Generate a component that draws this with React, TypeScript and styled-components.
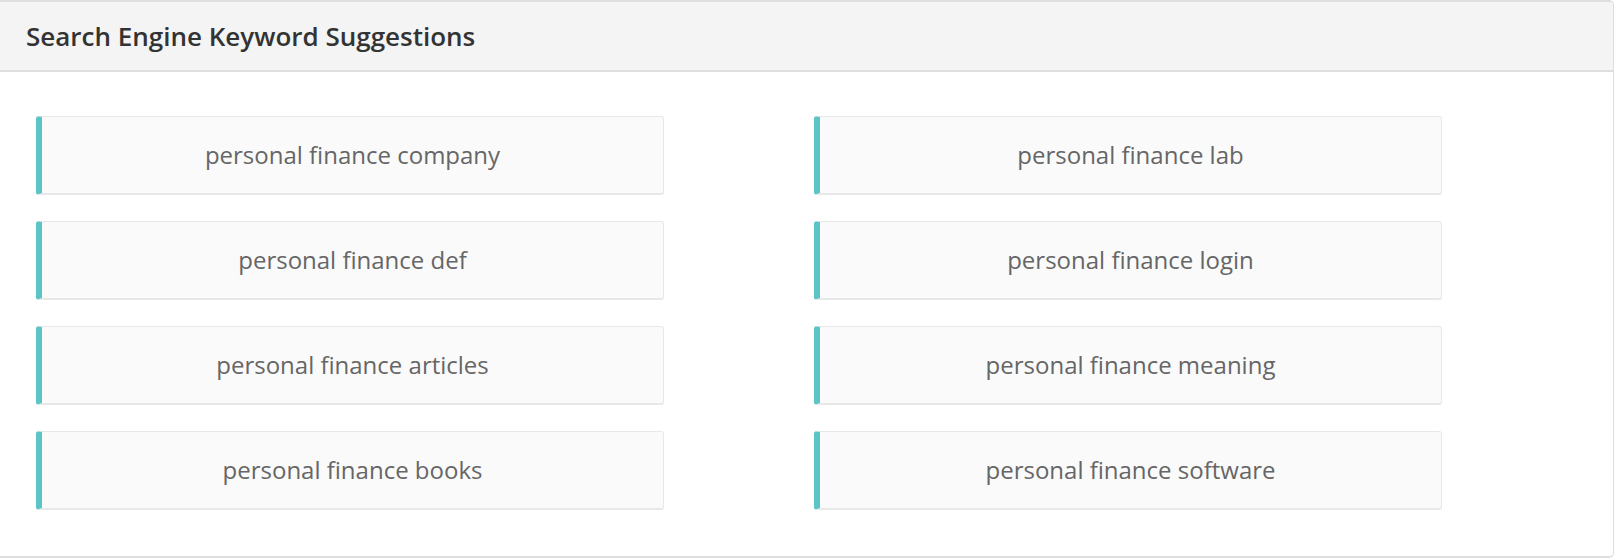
import React from "react";
import styled, { createGlobalStyle } from "styled-components";

const Global = createGlobalStyle`
  html, body { margin: 0; padding: 0; background: #ffffff; }
  body { font-family: "Open Sans", "Liberation Sans", sans-serif; }
`;

const Panel = styled.section`
  box-sizing: border-box;
  width: 1614px;
  height: 558px;
  border: 1px solid #dedede;
  border-left-width: 0;
  border-top-width: 2px;
  border-bottom-width: 2px;
  border-radius: 0 5px 5px 0;
  background: #ffffff;
  overflow: hidden;
`;

const Header = styled.header`
  box-sizing: border-box;
  height: 70px;
  background: #f4f4f4;
  border-bottom: 2px solid #dedede;
  display: flex;
  align-items: center;
  padding-left: 26px;
`;

const Title = styled.h2`
  margin: 0;
  font-size: 26px;
  font-weight: 600;
  color: #333333;
`;

const Grid = styled.div`
  display: grid;
  grid-template-columns: 628px 628px;
  column-gap: 150px;
  row-gap: 26px;
  padding: 44px 0 0 36px;
`;

const Card = styled.div`
  box-sizing: border-box;
  height: 79px;
  display: flex;
  align-items: center;
  justify-content: center;
  padding-bottom: 2px;
  background: #fafafa;
  border: 1px solid #e8e8e8;
  border-bottom-width: 2px;
  border-left: 6px solid #5cc4c7;
  border-radius: 3px;
  font-size: 24px;
  color: #666666;
`;

const keywords = [
  "personal finance company",
  "personal finance lab",
  "personal finance def",
  "personal finance login",
  "personal finance articles",
  "personal finance meaning",
  "personal finance books",
  "personal finance software",
];

export default function App() {
  return (
    <>
      <Global />
      <Panel>
        <Header>
          <Title>Search Engine Keyword Suggestions</Title>
        </Header>
        <Grid>
          {keywords.map((k) => (
            <Card key={k}>{k}</Card>
          ))}
        </Grid>
      </Panel>
    </>
  );
}
